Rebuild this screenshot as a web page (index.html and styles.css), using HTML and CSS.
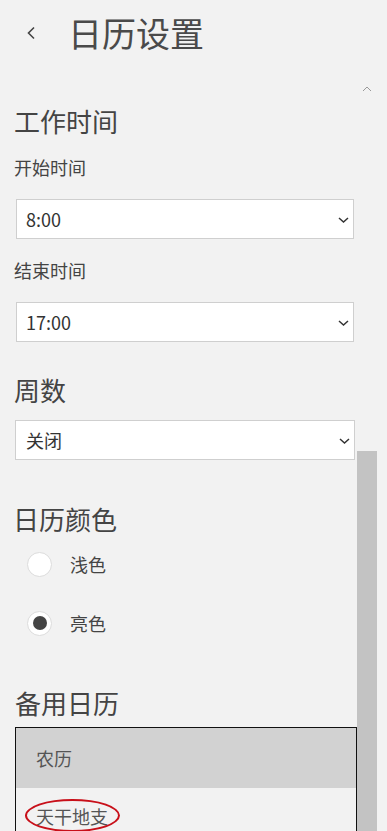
FILE: index.html
```html
<!DOCTYPE html>
<html lang="zh-CN">
<head>
<meta charset="utf-8">
<title>日历设置</title>
<link rel="stylesheet" href="styles.css">
</head>
<body>
<div class="page">
  <header class="header">
    <span class="back">
      <svg width="10" height="14" viewBox="0 0 10 14"><path d="M8 1.5 L2.5 7 L8 12.5" fill="none" stroke="#444" stroke-width="1.6"/></svg>
    </span>
    <h1 class="title">日历设置</h1>
  </header>

  <main class="content">
    <h2 class="section-title first">工作时间</h2>
    <div class="label">开始时间</div>
    <div class="select"><span>8:00</span><svg class="chev" width="11" height="6" viewBox="0 0 11 6"><path d="M1 1 L5.5 5 L10 1" fill="none" stroke="#333" stroke-width="1.5"/></svg></div>
    <div class="label">结束时间</div>
    <div class="select"><span>17:00</span><svg class="chev" width="11" height="6" viewBox="0 0 11 6"><path d="M1 1 L5.5 5 L10 1" fill="none" stroke="#333" stroke-width="1.5"/></svg></div>

    <h2 class="section-title weeks">周数</h2>
    <div class="select wide"><span>关闭</span><svg class="chev" width="11" height="6" viewBox="0 0 11 6"><path d="M1 1 L5.5 5 L10 1" fill="none" stroke="#333" stroke-width="1.5"/></svg></div>

    <h2 class="section-title colors">日历颜色</h2>
    <div class="radio-row"><span class="radio"></span><span class="radio-label">浅色</span></div>
    <div class="radio-row second"><span class="radio checked"></span><span class="radio-label">亮色</span></div>

    <h2 class="section-title alt">备用日历</h2>
    <div class="listbox">
      <div class="item selected">农历</div>
      <div class="item last">
        <span class="circled">天干地支</span>
      </div>
    </div>
  </main>

  <div class="scrollbar">
    <svg class="scroll-up" width="10" height="6" viewBox="0 0 10 6"><path d="M1 5 L5 1 L9 5" fill="none" stroke="#999" stroke-width="1"/></svg>
    <div class="thumb"></div>
  </div>
</div>
</body>
</html>
```

FILE: styles.css
```css
html, body {
  margin: 0;
  padding: 0;
  background: #f2f2f2;
}

body {
  font-family: "Noto Sans CJK SC", "Noto Sans", "Liberation Sans", sans-serif;
  color: #444;
}

.page {
  position: relative;
  width: 387px;
  height: 831px;
  overflow: hidden;
}

.header {
  display: flex;
  align-items: center;
  padding-top: 13px;
  height: 40px;
}

.back {
  display: flex;
  align-items: center;
  margin-left: 26px;
  width: 10px;
  height: 14px;
}

.title {
  margin: 0 0 0 32px;
  font-size: 34px;
  line-height: 40px;
  font-weight: 400;
  color: #4a4a4a;
}

.content {
  display: flex;
  flex-direction: column;
  align-items: flex-start;
}

.section-title {
  margin: 0;
  font-size: 26px;
  line-height: 32px;
  font-weight: 400;
  color: #444;
  padding-left: 14px;
}

.section-title.first { margin-top: 52px; }
.section-title.weeks { margin-top: 32px; }
.section-title.colors { margin-top: 43px; padding-left: 13px; }
.section-title.alt { margin-top: 44px; padding-left: 15px; }

.label {
  margin: 19px 0 0 14px;
  font-size: 18px;
  line-height: 22px;
  color: #444;
}

.select {
  box-sizing: border-box;
  display: flex;
  align-items: center;
  justify-content: space-between;
  width: 338px;
  height: 40px;
  margin: 21px 0 0 16px;
  padding: 0 4px 0 9px;
  background: #fff;
  border: 1px solid #cfcfcf;
  font-size: 18px;
  color: #333;
}

.select + .label { margin-top: 20px; }

.select.wide {
  width: 340px;
  margin: 14px 0 0 15px;
  padding-left: 10px;
}

.chev {
  margin-top: 1px;
}

.radio-row {
  display: flex;
  align-items: center;
  height: 40px;
  margin: 9px 0 0 27px;
}

.radio-row.second { margin-top: 19px; }

.radio {
  box-sizing: border-box;
  display: flex;
  align-items: center;
  justify-content: center;
  width: 25px;
  height: 25px;
  border-radius: 50%;
  background: #fff;
  border: 1.5px solid #dcdcdc;
}

.radio.checked::after {
  content: "";
  width: 14px;
  height: 14px;
  border-radius: 50%;
  background: #444;
}

.radio-label {
  margin-left: 18px;
  font-size: 18px;
  color: #444;
}

.listbox {
  box-sizing: border-box;
  width: 342px;
  margin: 8px 0 0 15px;
  border: 1px solid #111;
  border-bottom: none;
}

.item {
  display: flex;
  align-items: center;
  height: 60px;
  padding-left: 20px;
  font-size: 18px;
  color: #555;
  background: #f2f2f2;
}

.item.selected {
  background: #d2d2d2;
}

.item.last {
  align-items: flex-start;
  padding-top: 15px;
  box-sizing: border-box;
}

.circled {
  position: relative;
  line-height: 26px;
}

.circled::before {
  content: "";
  position: absolute;
  left: -11px;
  top: -4px;
  width: 95px;
  height: 33px;
  border: 2.5px solid #c8101a;
  border-radius: 50%;
  box-sizing: border-box;
}

.scrollbar {
  position: absolute;
  top: 0;
  left: 357px;
  width: 20px;
  height: 831px;
}

.scroll-up {
  position: absolute;
  top: 86px;
  left: 5px;
}

.thumb {
  position: absolute;
  top: 451px;
  left: 0;
  width: 20px;
  height: 380px;
  background: #c3c3c3;
}
```
